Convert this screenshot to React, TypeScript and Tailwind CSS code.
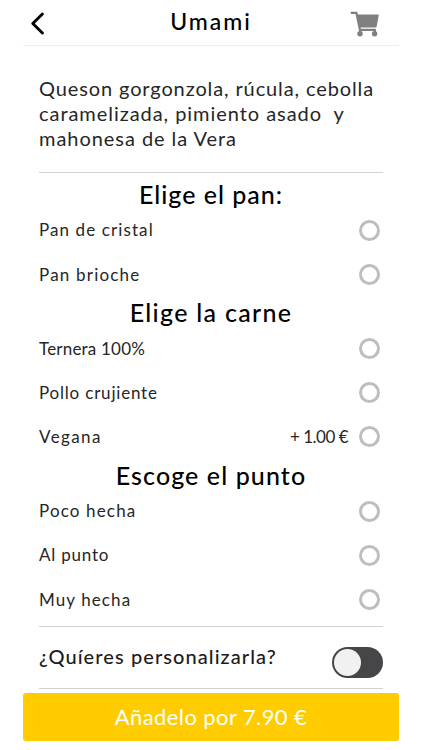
import { useState } from "react"

type Option = {
  label: string
  tracking: string
  price?: string
}

type Group = {
  title: string
  tracking: string
  options: Option[]
}

const groups: Group[] = [
  {
    title: "Elige el pan:",
    tracking: "tracking-[1px]",
    options: [
      { label: "Pan de cristal", tracking: "tracking-[1.1px]" },
      { label: "Pan brioche", tracking: "tracking-[1.2px]" },
    ],
  },
  {
    title: "Elige la carne",
    tracking: "tracking-[1.3px]",
    options: [
      { label: "Ternera 100%", tracking: "tracking-[0.2px]" },
      { label: "Pollo crujiente", tracking: "tracking-[0.8px]" },
      { label: "Vegana", tracking: "tracking-[1.4px]", price: "+ 1.00 €" },
    ],
  },
  {
    title: "Escoge el punto",
    tracking: "tracking-[1.1px]",
    options: [
      { label: "Poco hecha", tracking: "tracking-[1.15px]" },
      { label: "Al punto", tracking: "tracking-[0.8px]" },
      { label: "Muy hecha", tracking: "tracking-[1.1px]" },
    ],
  },
]

function CartIcon() {
  return (
    <svg width="30" height="28" viewBox="0 0 30 28" fill="#808080">
      <path d="M1.6 3.8H6.4L10 20.9H24.8" fill="none" stroke="#808080" strokeWidth="2.2" strokeLinecap="round" strokeLinejoin="round" />
      <path d="M6.6 5.6H27.9Q28.9 5.6 28.7 6.6L26.7 17.4Q26.5 18.4 25.5 18.4H9.4Z" />
      <path d="M9 20H11.4V25H9ZM23.6 20H26V25H23.6Z" />
      <circle cx="10" cy="24.7" r="2.7" />
      <circle cx="24.6" cy="24.7" r="2.7" />
    </svg>
  )
}

export default function App() {
  const [selected, setSelected] = useState<Record<string, string>>({})
  const [custom, setCustom] = useState(false)

  return (
    <main className="h-[750px] w-[422px] overflow-hidden bg-white pl-[23px] font-['Lato','Open_Sans',sans-serif] text-[#262626]">
      <div className="w-[376px]">
        <header className="flex h-[46px] items-center justify-between border-b border-[#ededed] pr-[19px] pl-[7px]">
          <button aria-label="Volver" className="w-[42px]">
            <svg width="16" height="24" viewBox="0 0 16 24" fill="none">
              <path d="M12.4 3L2.8 12.5L12.4 22" stroke="#000" strokeWidth="2.9" strokeLinecap="round" strokeLinejoin="round" />
            </svg>
          </button>
          <h1 className="pb-0.5 text-[23px] font-medium tracking-[2px] text-black">Umami</h1>
          <button aria-label="Carrito">
            <CartIcon />
          </button>
        </header>

        <div className="px-4">
          <div className="h-[127px] border-b border-[#d2d2d2] pt-[30px] text-xl leading-[25px]">
            <p className="whitespace-pre tracking-[0.88px]">Queson gorgonzola, rúcula, cebolla</p>
            <p className="whitespace-pre tracking-[0.95px]">caramelizada, pimiento asado  y</p>
            <p className="whitespace-pre tracking-[0.95px]">mahonesa de la Vera</p>
          </div>

          <div className="h-[454px] border-b border-[#d2d2d2] pt-[5px]">
            {groups.map((group) => (
              <section key={group.title}>
                <h2 className={`h-[30px] text-center text-[25px] leading-[33px] font-medium text-black ${group.tracking}`}>
                  {group.title}
                </h2>
                {group.options.map((option) => (
                  <label key={option.label} className="flex h-[44.2px] items-center pr-[3px] text-[17px]">
                    <span className={option.tracking}>{option.label}</span>
                    <span className="ml-auto tracking-[-0.5px]">{option.price}</span>
                    <input
                      type="radio"
                      name={group.title}
                      checked={selected[group.title] === option.label}
                      onChange={() => setSelected({ ...selected, [group.title]: option.label })}
                      className="ml-[11px] size-[21px] appearance-none rounded-full border-[3px] border-[#bebebe] checked:bg-[#ffcc00]"
                    />
                  </label>
                ))}
              </section>
            ))}
          </div>

          <div className="flex h-[62px] justify-between border-b border-[#d2d2d2]">
            <span className="pt-[16px] text-xl leading-[26px] font-medium tracking-[1.08px] text-[#1c1c1c]">
              ¿Quíeres personalizarla?
            </span>
            <button
              role="switch"
              aria-checked={custom}
              aria-label="Personalizar"
              onClick={() => setCustom(!custom)}
              className={`mt-5 flex h-[31px] w-[51px] items-center rounded-full bg-[#464648] px-[2px] ${custom ? "justify-end" : ""}`}
            >
              <span className="size-[27px] rounded-full bg-[#f1f1f1]" />
            </button>
          </div>
        </div>

        <button className="mt-1 h-[48px] w-full rounded-[3px] bg-[#ffcc00] pb-0.5 text-[22px] tracking-[0.4px] text-white">
          Añadelo por 7.90 €
        </button>
      </div>
    </main>
  )
}
